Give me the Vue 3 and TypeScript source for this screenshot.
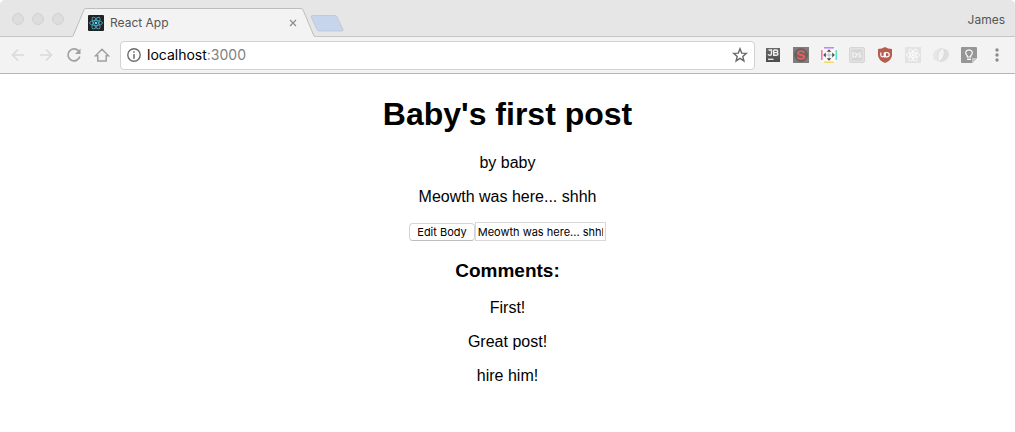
<script setup lang="ts">
import { ref } from 'vue'

const url = ref('localhost:3000')
const post = {
  title: "Baby's first post",
  author: 'baby',
}
const body = ref('Meowth was here... shhh')
const draft = ref('Meowth was here... shhh')
const comments = ref<string[]>(['First!', 'Great post!', 'hire him!'])

function editBody(): void {
  body.value = draft.value
}
</script>

<template>
  <div class="window">
    <header class="tabstrip">
      <div class="lights">
        <button class="light" type="button" aria-label="Close window"></button>
        <button class="light" type="button" aria-label="Minimize window"></button>
        <button class="light" type="button" aria-label="Zoom window"></button>
      </div>
      <div class="tab">
        <svg class="edge" viewBox="0 0 14 29" aria-hidden="true">
          <path d="M0 29V28.5L1 28 12 1.5Q12.300 .5 14 .5V29Z" fill="#f3f3f3" />
          <path d="M0 28.500Q.8 28.500 1.200 27.500L12 1.800Q12.500 .5 14 .5" fill="none" stroke="#bdbdbd" />
        </svg>
        <div class="tab-main">
          <svg class="favicon" viewBox="0 0 16 16" aria-hidden="true">
            <rect width="16" height="16" rx="1" fill="#222" />
            <g fill="none" stroke="#4aa9c4" stroke-width=".9">
              <ellipse cx="8" cy="8" rx="6.500" ry="2.500" />
              <ellipse cx="8" cy="8" rx="6.500" ry="2.500" transform="rotate(60 8 8)" />
              <ellipse cx="8" cy="8" rx="6.500" ry="2.500" transform="rotate(120 8 8)" />
            </g>
            <circle cx="8" cy="8" r="1.300" fill="#61dafb" />
          </svg>
          <span class="tab-title">React App</span>
          <button class="tab-close" type="button" aria-label="Close tab">
            <svg viewBox="0 0 8 8"><path d="M1 1l6 6M7 1L1 7" stroke="#8c8c8c" stroke-width="1.200" /></svg>
          </button>
        </div>
        <svg class="edge" viewBox="0 0 14 29" aria-hidden="true">
          <path d="M14 29V28.500L13 28 2 1.500Q1.700 .5 0 .5V29Z" fill="#f3f3f3" />
          <path d="M14 28.500Q13.200 28.500 12.800 27.500L2 1.800Q1.500 .5 0 .5" fill="none" stroke="#bdbdbd" />
        </svg>
      </div>
      <button class="new-tab" type="button" aria-label="New tab">
        <svg viewBox="0 0 34 17">
          <path d="M2.500 .5H25Q26.500 .5 27.200 2L33 14.500Q33.500 16 32 16H9Q7.500 16 6.800 14.500L1.200 2Q.7 .5 2.500 .5Z" fill="#c6d5ec" stroke="#bcc5d3" stroke-width=".8" />
        </svg>
      </button>
      <button class="profile" type="button">James</button>
    </header>

    <nav class="toolbar" aria-label="Browser toolbar">
      <button class="tool" type="button" aria-label="Back" disabled>
        <svg viewBox="0 0 16 16"><path d="M14 8H3M8 2.500L2.500 8 8 13.500" fill="none" stroke="#dadada" stroke-width="1.600" /></svg>
      </button>
      <button class="tool" type="button" aria-label="Forward" disabled>
        <svg viewBox="0 0 16 16"><path d="M2 8h11M8 2.500L13.500 8 8 13.500" fill="none" stroke="#dadada" stroke-width="1.600" /></svg>
      </button>
      <button class="tool" type="button" aria-label="Reload">
        <svg viewBox="0 0 16 16">
          <path d="M12.600 4A6 6 0 1 0 13.800 9.500" fill="none" stroke="#a0a0a0" stroke-width="1.700" />
          <path d="M14.500 1.500V7H9Z" fill="#a0a0a0" />
        </svg>
      </button>
      <button class="tool" type="button" aria-label="Home">
        <svg viewBox="0 0 16 16"><path d="M1.500 8.800L8 2.300l6.500 6.500H12.200V14H3.800V8.800Z" fill="none" stroke="#a0a0a0" stroke-width="1.500" /></svg>
      </button>

      <div class="omnibox">
        <svg class="info" viewBox="0 0 14 14" aria-hidden="true">
          <circle cx="7" cy="7" r="6.200" fill="none" stroke="#6c6c6c" stroke-width="1.400" />
          <path d="M7 3.300v1.500M7 6v4.700" stroke="#6c6c6c" stroke-width="1.500" />
        </svg>
        <a class="address" href="#" :aria-label="url">localhost<span class="port">:3000</span></a>
        <button class="star" type="button" aria-label="Bookmark this page">
          <svg viewBox="0 0 16 16"><path d="M8 1.800L9.700 6.100 14.300 6.400 10.800 9.400 11.900 13.900 8 11.400 4.100 13.900 5.200 9.400 1.700 6.400 6.300 6.100Z" fill="none" stroke="#686868" stroke-width="1.400" /></svg>
        </button>
      </div>

      <button class="tool" type="button" aria-label="JetBrains">
        <svg viewBox="0 0 16 16">
          <defs>
            <linearGradient id="jb" x1="0" y1="0" x2="0" y2="1">
              <stop offset="0" stop-color="#6a6a6a" />
              <stop offset="1" stop-color="#4c4c4c" />
            </linearGradient>
          </defs>
          <rect x="1" y="1" width="14" height="14" fill="url(#jb)" />
          <path d="M3.500 3H6.500V6.500Q6.500 8.300 5 8.300T3 7.300M8.700 3v5.300h2.500Q13 8.300 13 7T11.200 5.600H8.700M11.200 5.600Q12.700 5.600 12.700 4.300T11.200 3H8.700" fill="none" stroke="#eee" stroke-width="1.400" />
          <path d="M3 12.300h5.500" stroke="#eee" stroke-width="1.300" />
        </svg>
      </button>
      <button class="tool" type="button" aria-label="Stylish">
        <svg viewBox="0 0 16 16">
          <rect width="16" height="16" fill="#807c7c" />
          <circle cx="8" cy="8" r="6.300" fill="#6b6565" stroke="#5c5757" stroke-width=".8" />
          <path d="M11.400 5.900Q11.100 4.100 8 4.100T4.900 6C4.900 8.600 11.400 7.400 11.400 10Q11.400 11.900 8 11.900T4.600 10" fill="none" stroke="#e35f5c" stroke-width="1.800" />
        </svg>
      </button>
      <button class="tool" type="button" aria-label="Window resizer">
        <svg viewBox="0 0 16 16">
          <rect x="1" y="1" width="14" height="14" fill="#fafafa" />
          <path d="M3 .8h10" stroke="#c685f2" stroke-width="1.600" />
          <path d="M15.200 3v10" stroke="#5fe6c3" stroke-width="1.600" />
          <path d="M3 15.200h10" stroke="#f5da6a" stroke-width="1.600" />
          <path d="M.8 3v10" stroke="#f577a6" stroke-width="1.600" />
          <path d="M8 2.200l2.400 2.600H5.600ZM8 13.800l2.400-2.600H5.600ZM2.200 8l2.600-2.400v4.800ZM13.800 8l-2.600-2.400v4.800Z" fill="#4b4d50" />
          <path d="M8 5.500v5M5.500 8h5" stroke="#8c8c8c" stroke-dasharray="1 1" />
        </svg>
      </button>
      <button class="tool" type="button" aria-label="Screen capture">
        <svg viewBox="0 0 16 16">
          <rect x=".5" y=".5" width="15" height="15" rx="1.500" fill="#e2e2e2" stroke="#d6d6d6" />
          <rect x="2.500" y="2.500" width="11" height="11" rx="1" fill="#d6d6d6" />
          <path d="M4 6v4h1.500Q7.500 10 7.500 8T5.500 6ZM12 6H10.500Q9 6 9 7T10.500 8 12 9t-1.500 1H9" fill="none" stroke="#f4f4f4" stroke-width="1.200" />
        </svg>
      </button>
      <button class="tool" type="button" aria-label="uBlock Origin">
        <svg viewBox="0 0 16 16">
          <path d="M8 0Q11 2 15 2V8Q15 13 8 16 1 13 1 8V2Q5 2 8 0Z" fill="#b95c50" />
          <path d="M3.800 5.500V8Q3.800 9.800 5.500 9.800T7.300 8V5.500M8.300 9.800V5.500H9.700Q12.200 5.500 12.200 7.700T9.700 9.800H7" fill="none" stroke="#fff" stroke-width="1.200" />
        </svg>
      </button>
      <button class="tool" type="button" aria-label="React Developer Tools">
        <svg viewBox="0 0 16 16">
          <rect width="16" height="16" fill="#e3e3e3" />
          <g fill="none" stroke="#fafafa" stroke-width=".9">
            <ellipse cx="8" cy="8" rx="6.500" ry="2.500" />
            <ellipse cx="8" cy="8" rx="6.500" ry="2.500" transform="rotate(60 8 8)" />
            <ellipse cx="8" cy="8" rx="6.500" ry="2.500" transform="rotate(120 8 8)" />
          </g>
          <circle cx="8" cy="8" r="1.400" fill="#fafafa" />
        </svg>
      </button>
      <button class="tool" type="button" aria-label="Redux DevTools">
        <svg viewBox="0 0 16 16">
          <path d="M10 1C4 .5 0 4.500 0 9 0 12 2 14 5.500 14 3.500 10 5 4.500 10 1Z" fill="#e6e6e6" />
          <path d="M6 15C12 15.500 16 11.500 16 7 16 4 14 2 10.500 2 12.500 6 11 11.500 6 15Z" fill="#dedede" />
          <path d="M10 1C5 4 3.700 9 5.500 14M6 15c5-3.500 6.300-8.500 4.500-13" fill="none" stroke="#d4d4d4" stroke-width=".8" />
        </svg>
      </button>
      <button class="tool" type="button" aria-label="Keep">
        <svg viewBox="0 0 16 16">
          <path d="M1 0h14q1 0 1 1v10l-5 5H1q-1 0-1-1V1Q0 0 1 0Z" fill="#969696" />
          <path d="M11 16v-5h5Z" fill="#c5c5c5" />
          <path d="M6.300 10V8.700C3.300 6.500 4.700 2.800 8 2.800s4.700 3.700 1.700 5.900V10Z" fill="none" stroke="#fff" stroke-width="1.200" />
          <path d="M6 12.300h4" stroke="#fff" stroke-width="1.300" />
        </svg>
      </button>
      <button class="tool" type="button" aria-label="Menu">
        <svg viewBox="0 0 16 16" fill="#8c8c8c"><circle cx="8" cy="3" r="1.700" /><circle cx="8" cy="8" r="1.700" /><circle cx="8" cy="13" r="1.700" /></svg>
      </button>
    </nav>

    <main class="page">
      <h1>{{ post.title }}</h1>
      <p>by {{ post.author }}</p>
      <p>{{ body }}</p>
      <form class="editor" @submit.prevent="editBody">
        <button class="edit" type="submit">Edit Body</button>
        <input v-model="draft" class="draft" type="text" aria-label="Post body" />
      </form>
      <h3>Comments:</h3>
      <p v-for="comment in comments" :key="comment">{{ comment }}</p>
    </main>
  </div>
</template>

<style>
body {
  margin: 0;
  background: #fff;
}
</style>

<style scoped>
.window {
  font-family: Inter, "Liberation Sans", sans-serif;
}
button {
  margin: 0;
  padding: 0;
  border: 0;
  background: none;
  font-family: inherit;
}
svg {
  display: block;
}
.tabstrip {
  display: flex;
  align-items: flex-end;
  height: 37px;
  border-radius: 5px 5px 0 0;
  background: #e6e6e6;
  box-shadow: inset 0 -1px #c6c6c6;
}
.lights {
  display: flex;
  align-self: center;
  gap: 8px;
  width: 60px;
  padding-left: 12px;
}
.light {
  width: 12px;
  height: 12px;
  border: 1px solid #d2d2d2;
  border-radius: 50%;
  background: #dddddd;
}
.tab {
  display: flex;
  flex: 0 1 243px;
  height: 29px;
}
.edge {
  flex: none;
  width: 14px;
  height: 29px;
}
.tab-main {
  display: flex;
  flex: 1;
  align-items: center;
  box-sizing: border-box;
  padding: 0 2px;
  border-top: 1px solid #bdbdbd;
  background: #f3f3f3;
}
.favicon {
  width: 16px;
  height: 16px;
}
.tab-title {
  flex: 1;
  margin-left: 6px;
  color: #555;
  font-size: 12px;
  line-height: 16px;
}
.tab-close {
  padding: 2px;
}
.tab-close svg {
  width: 8px;
  height: 8px;
}
.new-tab {
  align-self: center;
  margin: 10px 0 0 -5px;
}
.new-tab svg {
  width: 34px;
  height: 17px;
}
.profile {
  align-self: center;
  margin: 2px 10px 0 auto;
  color: #555;
  font-size: 12px;
  line-height: 16px;
}
.toolbar {
  display: flex;
  align-items: center;
  height: 36px;
  padding: 0 4px;
  border-bottom: 1px solid #b7b7b7;
  background: #f3f3f3;
}
.tool {
  display: flex;
  flex: none;
  align-items: center;
  justify-content: center;
  width: 28px;
  height: 28px;
}
.tool svg {
  width: 16px;
  height: 16px;
}
.omnibox {
  display: flex;
  flex: 1;
  align-items: center;
  box-sizing: border-box;
  height: 29px;
  margin: 0 4px;
  padding: 0 6px;
  border: 1px solid #d2d2d2;
  border-radius: 4px;
  background: #fff;
}
.info {
  flex: none;
  width: 14px;
  height: 14px;
}
.address {
  flex: 1;
  margin-left: 6px;
  color: #000;
  font-size: 14px;
  line-height: 20px;
  text-decoration: none;
}
.port {
  color: #808080;
}
.star svg {
  width: 16px;
  height: 16px;
}
.page {
  padding: 0 8px;
  color: #000;
  font-family: "Liberation Sans", Arial, sans-serif;
  font-size: 16px;
  line-height: 18px;
  text-align: center;
}
h1 {
  margin: 21px 0;
  font-size: 32px;
  line-height: 38px;
}
p {
  margin: 16px 0;
}
.editor {
  display: flex;
  align-items: center;
  justify-content: center;
}
.edit {
  height: 18px;
  padding: 0 7px;
  border: 1px solid #d4d4d4;
  border-bottom-color: #bdbdbd;
  border-radius: 4px;
  background: #fff;
  font-family: Inter, sans-serif;
  font-size: 11px;
  line-height: 16px;
  color: #000;
}
.draft {
  box-sizing: border-box;
  width: 131px;
  height: 19px;
  padding: 1px 2px;
  border: 1px solid #d8d8d8;
  background: #fff;
  color: #000;
  font-family: Inter, sans-serif;
  font-size: 11px;
}
h3 {
  margin: 19px 0 17px;
  font-size: 19px;
  line-height: 22px;
}
</style>
